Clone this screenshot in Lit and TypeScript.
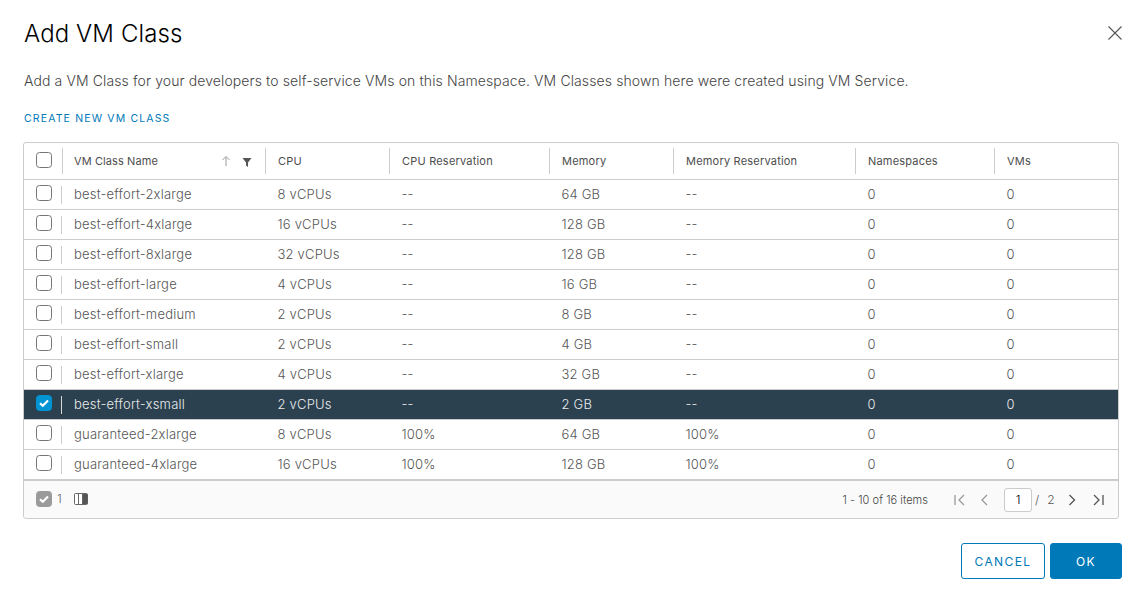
import { LitElement, html, css, svg } from "lit";
import { customElement } from "lit/decorators.js";

type Row = { name: string; cpu: string; res: string; mem: string; memRes: string; selected?: boolean };

const rows: Row[] = [
  { name: "best-effort-2xlarge", cpu: "8 vCPUs", res: "--", mem: "64 GB", memRes: "--" },
  { name: "best-effort-4xlarge", cpu: "16 vCPUs", res: "--", mem: "128 GB", memRes: "--" },
  { name: "best-effort-8xlarge", cpu: "32 vCPUs", res: "--", mem: "128 GB", memRes: "--" },
  { name: "best-effort-large", cpu: "4 vCPUs", res: "--", mem: "16 GB", memRes: "--" },
  { name: "best-effort-medium", cpu: "2 vCPUs", res: "--", mem: "8 GB", memRes: "--" },
  { name: "best-effort-small", cpu: "2 vCPUs", res: "--", mem: "4 GB", memRes: "--" },
  { name: "best-effort-xlarge", cpu: "4 vCPUs", res: "--", mem: "32 GB", memRes: "--" },
  { name: "best-effort-xsmall", cpu: "2 vCPUs", res: "--", mem: "2 GB", memRes: "--", selected: true },
  { name: "guaranteed-2xlarge", cpu: "8 vCPUs", res: "100%", mem: "64 GB", memRes: "100%" },
  { name: "guaranteed-4xlarge", cpu: "16 vCPUs", res: "100%", mem: "128 GB", memRes: "100%" },
];

const check = svg`<svg class="tick" width="16" height="16" viewBox="0 0 16 16"><path d="M4 8.2l2.8 2.6L12 5.4" fill="none" stroke="#fff" stroke-width="2.2"/></svg>`;

@customElement("app-root")
export class AppRoot extends LitElement {
  static styles = css`
    :host {
      display: block;
      box-sizing: border-box;
      height: 598px;
      padding: 0 21px 0 24px;
      background: #fff;
      font-family: "Inter", "Liberation Sans", sans-serif;
      font-size: 12px;
      color: #565656;
      overflow: hidden;
    }
    .head {
      height: 66px;
      display: flex;
      align-items: center;
      justify-content: space-between;
    }
    h1 {
      margin: 0;
      font-size: 24px;
      font-weight: 300;
      color: #000;
      letter-spacing: 0.1px;
    }
    .close { display: block; }
    .intro {
      height: 30px;
      line-height: 30px;
      font-size: 14px;
      font-weight: 300;
      color: #444;
      letter-spacing: 0.11px;
      white-space: nowrap;
    }
    .link {
      margin-top: 13px;
      height: 19px;
      line-height: 19px;
      font-size: 10.5px;
      font-weight: 400;
      letter-spacing: 1.15px;
      color: #0079b8;
    }
    .grid {
      margin: 14px 3px 0 -1px;
      border: 1px solid #ccc;
      border-radius: 3px;
      height: 377px;
      box-sizing: border-box;
      display: flex;
      flex-direction: column;
    }
    .row {
      display: grid;
      grid-template-columns: 38px 203px 124px 160px 124px 182px 139px 1fr;
      height: 30px;
      box-sizing: border-box;
      border-bottom: 1px solid #ccc;
      align-items: center;
      font-weight: 300;
      font-size: 13px;
      letter-spacing: 0.2px;
      color: #565656;
    }
    .row.header {
      height: 37px;
      font-size: 11px;
      font-weight: 400;
      color: #4d4d4d;
      letter-spacing: 0.2px;
    }
    .row.selected { background: #2b4150; color: #eaeaea; }
    .row.last { border-bottom: 2px solid #ccc; height: 31px; }
    .cell {
      height: 100%;
      display: flex;
      align-items: center;
      padding: 0 0 1px 12.5px;
      white-space: nowrap;
      box-sizing: border-box;
    }
    .header .cell.sep { border-left: 1px solid #ccc; height: 26px; padding: 0 0 0 12px; }
    .cell.name { border-left: 1px solid #ccc; height: 18px; margin-left: -1px; padding-left: 12px; }
    .header .cell.name {
      height: 26px;
      margin-left: 0;
      padding: 0 13px 0 11px;
      justify-content: space-between;
      letter-spacing: 0.1px;
    }
    .row.selected .cell.name { border-left-color: #d8d8d8; }
    .selcol { display: flex; align-items: center; padding: 0 0 3px 12px; box-sizing: border-box; height: 100%; }
    .header .selcol { padding-bottom: 2px; }
    .box {
      width: 16px;
      height: 16px;
      box-sizing: border-box;
      border: 1px solid #757575;
      border-radius: 3.5px;
      background: #fff;
      display: block;
    }
    .box.on { background: #0094d2; border-color: #0094d2; position: relative; }
    .box.off { background: #9a9a9a; border-color: #9a9a9a; position: relative; }
    .tick { position: absolute; left: -1px; top: -1px; }
    .sort { display: flex; align-items: center; gap: 11px; }
    .filter { margin-top: 2px; }
    .foot {
      flex: 1;
      display: flex;
      align-items: center;
      justify-content: space-between;
      background: #fafafa;
      padding: 0 14px 0 12px;
      border-radius: 0 0 3px 3px;
    }
    .foot-left { display: flex; align-items: center; gap: 5px; margin-bottom: 2px; font-size: 12px; font-weight: 300; color: #666; }
    .cols { margin-left: 7px; display: block; }
    .pager { display: flex; align-items: center; font-size: 11px; font-weight: 300; color: #444; }
    .range { margin-right: 26px; padding-top: 1px; letter-spacing: 0.05px; }
    .pager svg { display: block; }
    .page {
      width: 28px;
      height: 24px;
      box-sizing: border-box;
      border: 1px solid #ccc;
      border-radius: 3px;
      background: #fff;
      display: flex;
      align-items: center;
      justify-content: center;
      color: #000;
      font-size: 12px;
      margin: 0 3px 0 16px;
    }
    .total { width: 33px; display: flex; gap: 8px; color: #565656; font-size: 12px; }
    .actions {
      margin-top: 24px;
      display: flex;
      justify-content: flex-end;
      gap: 5px;
    }
    .btn {
      height: 36px;
      box-sizing: border-box;
      border: 1px solid #0079b8;
      border-radius: 3px;
      display: flex;
      align-items: center;
      justify-content: center;
      font-size: 12px;
      font-weight: 400;
      letter-spacing: 1.4px;
      color: #0079b8;
      background: #fff;
    }
    .cancel { width: 84px; }
    .ok { width: 72px; background: #0079b8; color: #fff; }
  `;

  private pagerIcon(d: string, color: string, w: number, ml: number) {
    return html`<svg style="margin-left:${ml}px" width=${w} height="14" viewBox="0 0 ${w} 14"><path d=${d} fill="none" stroke=${color} stroke-width="1.3"/></svg>`;
  }

  render() {
    return html`
      <div class="head">
        <h1>Add VM Class</h1>
        <svg class="close" width="16" height="16" viewBox="0 0 16 16"><path d="M2.500 1.500l13 13M15.500 1.500l-13 13" stroke="#555" stroke-width="1.1" fill="none"/></svg>
      </div>
      <div class="intro">Add a VM Class for your developers to self-service VMs on this Namespace. VM Classes shown here were created using VM Service.</div>
      <div class="link">CREATE NEW VM CLASS</div>
      <div class="grid">
        <div class="row header">
          <div class="selcol"><span class="box"></span></div>
          <div class="cell name">
            <span>VM Class Name</span>
            <span class="sort">
              <svg width="10" height="12" viewBox="0 0 10 12"><path d="M5 11V2M1.500 5L5 1.500 8.500 5" fill="none" stroke="#9a9a9a" stroke-width="1"/></svg>
              <svg class="filter" width="10" height="10" viewBox="0 0 10 10"><path d="M0.500 1h9L6 5.500V10L4 8.500V5.500z" fill="#555"/></svg>
            </span>
          </div>
          ${["CPU", "CPU Reservation", "Memory", "Memory Reservation", "Namespaces", "VMs"].map(
            (h) => html`<div class="cell sep">${h}</div>`
          )}
        </div>
        ${rows.map(
          (r, i) => html`
            <div class="row ${r.selected ? "selected" : ""} ${i === rows.length - 1 ? "last" : ""}">
              <div class="selcol">
                ${r.selected ? html`<span class="box on">${check}</span>` : html`<span class="box"></span>`}
              </div>
              <div class="cell name">${r.name}</div>
              <div class="cell">${r.cpu}</div>
              <div class="cell">${r.res}</div>
              <div class="cell">${r.mem}</div>
              <div class="cell">${r.memRes}</div>
              <div class="cell">0</div>
              <div class="cell">0</div>
            </div>
          `
        )}
        <div class="foot">
          <div class="foot-left">
            <span class="box off">${check}</span>
            <span>1</span>
            <svg class="cols" width="14" height="12" viewBox="0 0 14 12">
              <rect x="0.500" y="0.500" width="13" height="11" rx="1" fill="#fff" stroke="#666"/>
              <path d="M4.500 1v10M8.500 1v10" stroke="#666"/>
              <rect x="9" y="1" width="4.500" height="10" fill="#555"/>
            </svg>
          </div>
          <div class="pager">
            <span class="range">1 - 10 of 16 items</span>
            ${this.pagerIcon("M1 2v10M10 2L5 7l5 5", "#9a9a9a", 11, 0)}
            ${this.pagerIcon("M7 2L2 7l5 5", "#9a9a9a", 8, 15)}
            <div class="page">1</div>
            <div class="total"><span>/</span><span>2</span></div>
            ${this.pagerIcon("M1.500 2l5 5-5 5", "#555", 8, 0)}
            ${this.pagerIcon("M1 2l5 5-5 5M10 2v10", "#555", 11, 17)}
          </div>
        </div>
      </div>
      <div class="actions">
        <div class="btn cancel">CANCEL</div>
        <div class="btn ok">OK</div>
      </div>
    `;
  }
}
